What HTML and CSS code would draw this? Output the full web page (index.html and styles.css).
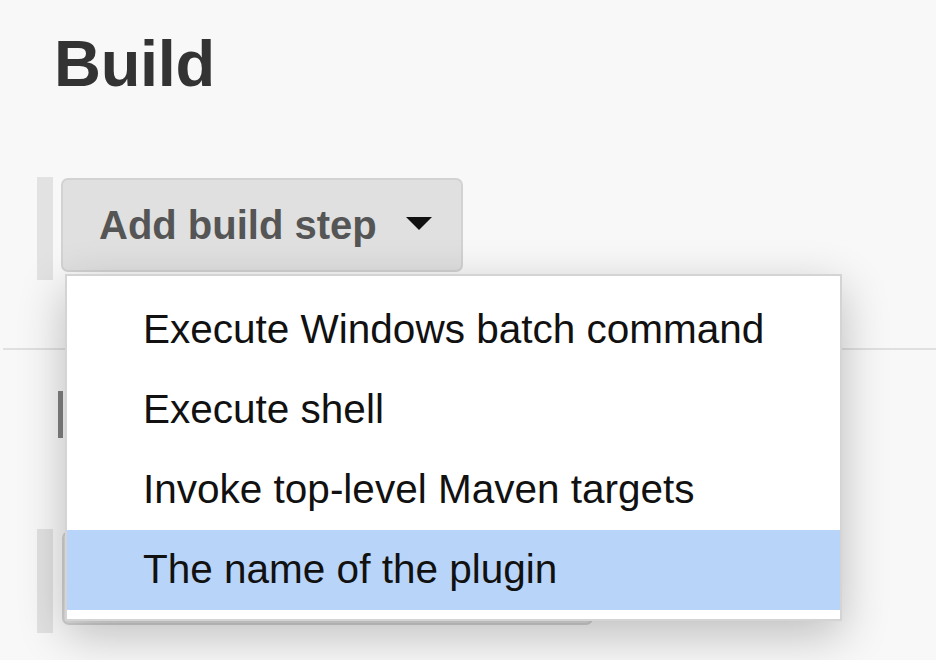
FILE: index.html
```html
<!DOCTYPE html>
<html lang="en">
<head>
<meta charset="utf-8">
<title>Build</title>
<link rel="stylesheet" href="styles.css">
</head>
<body>
<main class="page">
  <h1 class="title">Build</h1>

  <div class="step-row">
    <div class="side-bar"></div>
    <div class="dropdown">
      <button class="btn" type="button">
        <span class="btn-label">Add build step</span>
        <svg class="caret" width="26" height="13" viewBox="0 0 26 13" aria-hidden="true"><path d="M0 0 H26 L13 13 Z" fill="#111"/></svg>
      </button>
      <ul class="menu">
        <li class="menu-item">Execute Windows batch command</li>
        <li class="menu-item">Execute shell</li>
        <li class="menu-item">Invoke top-level Maven targets</li>
        <li class="menu-item active">The name of the plugin</li>
      </ul>
    </div>
  </div>

  <div class="divider"></div>
  <div class="mark"></div>

  <div class="step-row second">
    <div class="side-bar"></div>
    <div class="btn ghost"></div>
  </div>
</main>
</body>
</html>
```

FILE: styles.css
```css
* { box-sizing: border-box; }

html, body {
  margin: 0;
  padding: 0;
  background: #f8f8f8;
  font-family: "Liberation Sans", Arial, Helvetica, sans-serif;
  overflow: hidden;
}

.page {
  width: 936px;
  height: 660px;
  padding-top: 31px;
}

.title {
  margin: 0 0 0 54px;
  font-size: 65px;
  line-height: 65px;
  font-weight: 700;
  letter-spacing: -0.3px;
  color: #333333;
}

.step-row {
  display: flex;
  align-items: flex-start;
  gap: 8px;
  margin: 81px 0 0 37px;
}

.side-bar {
  width: 16px;
  height: 103px;
  background: #e2e2e2;
  flex: none;
}

.dropdown {
  position: relative;
  margin-top: 1px;
}

.btn {
  display: flex;
  align-items: center;
  width: 402px;
  height: 94px;
  padding: 0 0 0 36px;
  background: #e0e0e0;
  border: 2px solid #d2d2d2;
  border-radius: 7px;
  font-family: inherit;
  cursor: pointer;
}

.btn-label {
  font-size: 40px;
  font-weight: 700;
  color: #555555;
  line-height: 1;
}

.caret {
  margin-left: 29px;
  margin-top: -4px;
  display: block;
}

.menu {
  position: absolute;
  top: calc(100% + 2px);
  left: 4px;
  width: 777px;
  margin: 0;
  padding: 14px 0 9px;
  list-style: none;
  background: #ffffff;
  border: 2px solid #d4d4d4;
  box-shadow: 0 14px 44px rgba(0, 0, 0, 0.24);
  z-index: 10;
}

.menu-item {
  height: 80px;
  line-height: 78px;
  padding-left: 76px;
  font-size: 40.5px;
  color: #111111;
  white-space: nowrap;
}

.menu-item.active {
  background: #b8d4f8;
}

.divider {
  height: 2px;
  margin: 68px 0 0 3px;
  background: #e0e0e0;
}

.mark {
  width: 5px;
  height: 47px;
  margin: 41px 0 0 58px;
  background: #808080;
}

.step-row.second {
  margin-top: 91px;
  gap: 9px;
}

.step-row.second .side-bar {
  height: 104px;
}

.btn.ghost {
  width: 531px;
  margin-top: 2px;
  padding: 0;
}
```
